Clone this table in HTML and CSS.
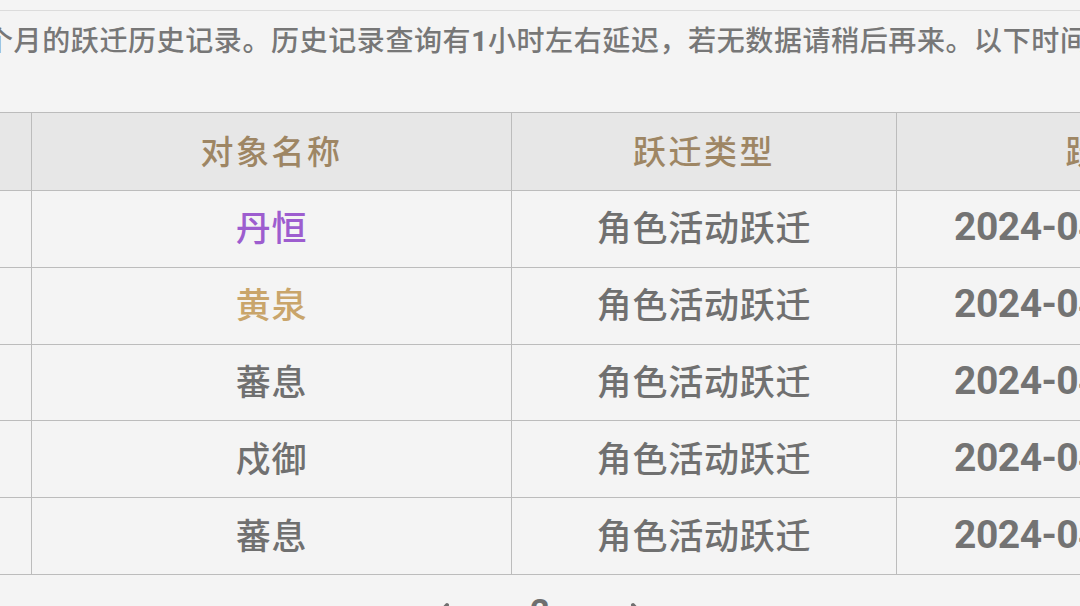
FILE: index.html
```html
<!DOCTYPE html>
<html lang="zh-CN">
<head>
<meta charset="utf-8">
<title>跃迁记录</title>
<link rel="stylesheet" href="styles.css">
</head>
<body>
<div class="page">
  <div class="rule"></div>
  <p class="notice">个月的跃迁历史记录。历史记录查询有<b class="digit">1</b>小时左右延迟，若无数据请稍后再来。以下时间为服务器时间。</p>
  <table class="records">
    <colgroup>
      <col class="c-type"><col class="c-name"><col class="c-gacha"><col class="c-time">
    </colgroup>
    <thead>
      <tr><th>对象类型</th><th>对象名称</th><th>跃迁类型</th><th>跃迁时间</th></tr>
    </thead>
    <tbody>
      <tr><td>角色</td><td class="r4">丹恒</td><td>角色活动跃迁</td><td class="time">2024-04-22 13:05:21</td></tr>
      <tr><td>角色</td><td class="r5">黄泉</td><td>角色活动跃迁</td><td class="time">2024-04-22 13:05:21</td></tr>
      <tr><td>光锥</td><td>蕃息</td><td>角色活动跃迁</td><td class="time">2024-04-22 13:05:21</td></tr>
      <tr><td>光锥</td><td>戍御</td><td>角色活动跃迁</td><td class="time">2024-04-22 13:05:21</td></tr>
      <tr><td>光锥</td><td>蕃息</td><td>角色活动跃迁</td><td class="time">2024-04-22 13:05:21</td></tr>
    </tbody>
  </table>
  <div class="pager">
    <span class="arrow"><svg width="22" height="34" viewBox="0 0 22 34"><path d="M17 3 L5 17 L17 31" fill="none" stroke="#707070" stroke-width="4" stroke-linecap="round" stroke-linejoin="round"/></svg></span>
    <span class="num">2</span>
    <span class="arrow"><svg width="22" height="34" viewBox="0 0 22 34"><path d="M5 3 L17 17 L5 31" fill="none" stroke="#707070" stroke-width="4" stroke-linecap="round" stroke-linejoin="round"/></svg></span>
  </div>
</div>
</body>
</html>
```

FILE: styles.css
```css
html, body {
  margin: 0;
  padding: 0;
  background: #f4f4f4;
  overflow: hidden;
}

body {
  width: 1080px;
  height: 606px;
  font-family: "Noto Sans CJK SC", "Noto Sans", sans-serif;
  color: #717171;
}

.page {
  padding-top: 10px;
  overflow: hidden;
  height: 596px;
}

.rule {
  border-top: 1px solid #dcdcdc;
}

.notice {
  margin: 0 0 0 -15px;
  height: 101px;
  padding-top: 8px;
  box-sizing: border-box;
  font-size: 28px;
  line-height: 40px;
  letter-spacing: 0.6px;
  font-weight: 500;
  color: #777777;
  white-space: nowrap;
}

.notice .digit {
  font-family: "Roboto", sans-serif;
  font-weight: 700;
}

.records {
  margin-left: -449px;
  border-collapse: collapse;
  table-layout: fixed;
  width: 1825px;
}

.c-type { width: 480px; }
.c-name { width: 480px; }
.c-gacha { width: 385px; }
.c-time { width: 480px; }

.records th,
.records td {
  border: 1px solid #bcbcbc;
  padding: 0;
  text-align: center;
  white-space: nowrap;
  overflow: hidden;
  box-sizing: border-box;
}

.records th {
  height: 78px;
  padding-bottom: 4px;
  background: #e7e7e7;
  color: #9e8664;
  font-size: 33px;
  letter-spacing: 2.5px;
  font-weight: 500;
}

.records td {
  height: 76.8px;
  padding-bottom: 6px;
  font-size: 35px;
  letter-spacing: 0.8px;
  font-weight: 500;
  color: #707070;
}

.records td.r4 { color: #9d5dcf; }
.records td.r5 { color: #c9a56b; }

.records td.time {
  text-align: left;
  padding-left: 57px;
  padding-bottom: 3px;
  font-family: "Roboto", sans-serif;
  font-weight: 700;
  font-size: 39px;
  letter-spacing: -0.5px;
  color: #737373;
}

.pager {
  display: flex;
  justify-content: center;
  align-items: flex-start;
  gap: 78px;
  padding-top: 19px;
}

.pager .arrow {
  display: block;
  padding-top: 8px;
}

.pager .num {
  font-family: "Roboto", sans-serif;
  font-weight: 700;
  font-size: 34px;
  line-height: 34px;
  color: #6f6f6f;
}
```
